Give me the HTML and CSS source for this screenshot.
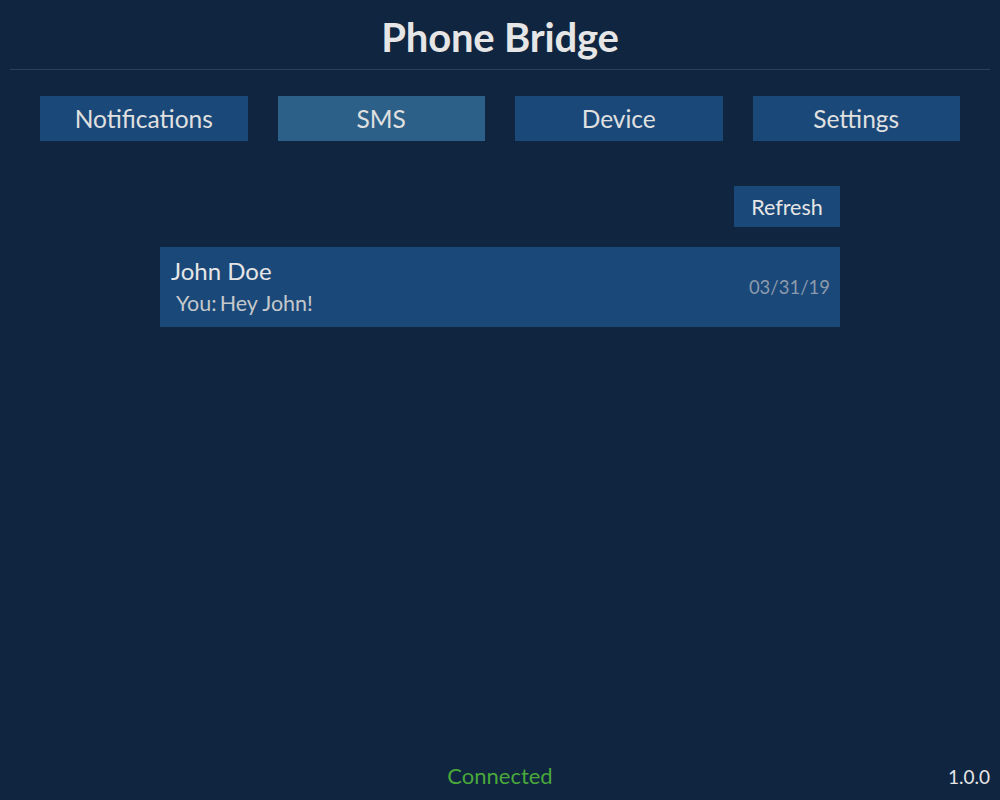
FILE: index.html
```html
<!DOCTYPE html>
<html>
<head>
<meta charset="utf-8">
<link rel="stylesheet" href="styles.css">
</head>
<body>
<div class="app">
  <header class="header">
    <h1 class="title">Phone Bridge</h1>
  </header>
  <nav class="tabs">
    <div class="tab">Notifications</div>
    <div class="tab active">SMS</div>
    <div class="tab">Device</div>
    <div class="tab">Settings</div>
  </nav>
  <main class="content">
    <div class="toolbar">
      <div class="refresh">Refresh</div>
    </div>
    <div class="thread">
      <div class="thread-main">
        <div class="thread-name">John Doe</div>
        <div class="thread-msg"><span class="you">You:</span>Hey John!</div>
      </div>
      <div class="thread-date">03/31/19</div>
    </div>
  </main>
  <footer class="footer">
    <div class="status">Connected</div>
    <div class="version">1.0.0</div>
  </footer>
</div>
</body>
</html>
```

FILE: styles.css
```css
html, body {
  margin: 0;
  padding: 0;
  height: 100%;
}
body {
  background: #0f2540;
  font-family: Lato, "Open Sans", sans-serif;
  color: #e6e6e6;
}
.app {
  height: 800px;
  display: flex;
  flex-direction: column;
}
.header {
  margin: 0 10px;
  border-bottom: 1px solid #2d415a;
  height: 69px;
  display: flex;
  align-items: center;
  justify-content: center;
}
.title {
  margin: 4px 0 0;
  font-size: 40px;
  font-weight: 700;
  color: #e6e6e6;
  letter-spacing: -0.2px;
}
.tabs {
  display: grid;
  grid-template-columns: repeat(4, 1fr);
  column-gap: 30px;
  padding: 0 40px;
  margin-top: 26px;
}
.tab {
  height: 45px;
  background: #1a4878;
  display: flex;
  align-items: center;
  justify-content: center;
  font-size: 24.5px;
  color: #e0e0e0;
}
.tab.active {
  background: #2c6088;
}
.content {
  flex: 1;
  width: 680px;
  margin: 0 auto;
  display: flex;
  flex-direction: column;
}
.toolbar {
  display: flex;
  justify-content: flex-end;
  margin-top: 45px;
}
.refresh {
  width: 106px;
  height: 41px;
  background: #1a4878;
  display: flex;
  align-items: center;
  justify-content: center;
  font-size: 21.5px;
  color: #e6e6e6;
}
.thread {
  margin-top: 20px;
  height: 80px;
  background: #1a4878;
  display: flex;
  align-items: center;
  justify-content: space-between;
  padding: 0 10px 0 11px;
}
.thread-main {
  display: flex;
  flex-direction: column;
}
.thread-name {
  font-size: 24px;
  color: #e6e6e6;
  line-height: 30px;
  margin-top: -1px;
}
.thread-msg {
  font-size: 21.5px;
  color: #c4c8cc;
  line-height: 30px;
  padding-left: 5px;
  margin-top: 2px;
}
.you {
  margin-right: 3px;
}
.thread-date {
  font-size: 18.5px;
  color: #8b9aac;
}
.footer {
  height: 46px;
  display: flex;
  align-items: center;
  justify-content: center;
  position: relative;
  padding-bottom: 2px;
}
.status {
  font-size: 22px;
  color: #4aa83a;
}
.version {
  position: absolute;
  right: 10px;
  top: 13px;
  font-size: 19px;
  color: #e6e6e6;
}
```
